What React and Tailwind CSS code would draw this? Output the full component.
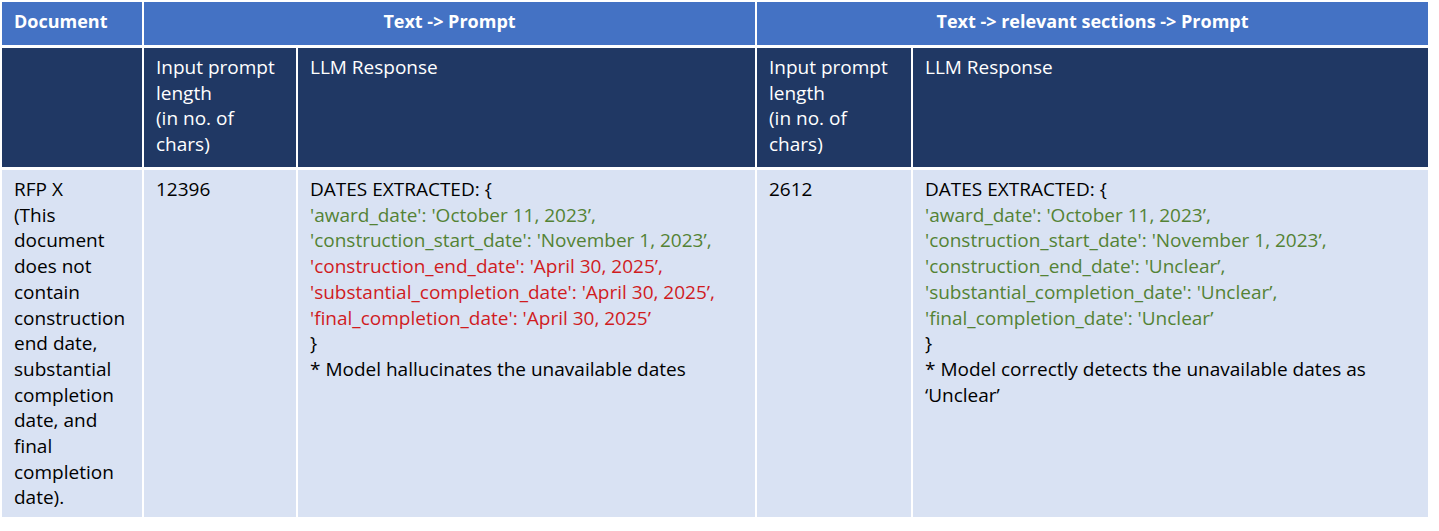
import React from "react";

// colours taken from the slide theme
const GREEN = "text-[#548235]";
const RED = "text-[#d01c1f]";

const hallucinated = [
  { t: "'award_date': 'October 11, 2023’,", c: GREEN },
  { t: "'construction_start_date': 'November 1, 2023’,", c: GREEN },
  { t: "'construction_end_date': 'April 30, 2025’,", c: RED },
  { t: "'substantial_completion_date': 'April 30, 2025’,", c: RED },
  { t: "'final_completion_date': 'April 30, 2025’", c: RED },
];

const detected = [
  "'award_date': 'October 11, 2023’,",
  "'construction_start_date': 'November 1, 2023’,",
  "'construction_end_date': 'Unclear’,",
  "'substantial_completion_date': 'Unclear’,",
  "'final_completion_date': 'Unclear’",
];

const docLines = [
  "RFP X",
  "(This",
  "document",
  "does not",
  "contain",
  "construction",
  "end date,",
  "substantial",
  "completion",
  "date, and",
  "final",
  "completion",
  "date).",
];

const promptLen = ["Input prompt", "length", "(in no. of", "chars)"];

function Lines({ items }) {
  return items.map((l, i) => (
    <div key={i} className="whitespace-nowrap">{l}</div>
  ));
}

export default function App() {
  return (
    <div
      className="bg-white w-[1439px] h-[531px] pl-[2px] pt-[2px] text-[19px] leading-[25.7px]"
      style={{ fontFamily: "'Open Sans', Lato, sans-serif" }}
    >
      <div className="grid grid-cols-[140px_152px_457px_154px_515px] grid-rows-[43px_119px_347px] gap-x-[2px] gap-y-[3px]">
        {/* Header row */}
        <div className="bg-[#4472c4] text-white font-bold text-[18px] flex items-center pl-3 pb-[3px]">
          Document
        </div>
        <div className="col-span-2 bg-[#4472c4] text-white font-bold text-[18px] flex items-center justify-center pb-[3px]">
          Text -&gt; Prompt
        </div>
        <div className="col-span-2 bg-[#4472c4] text-white font-bold text-[18px] flex items-center justify-center pb-[3px]">
          Text -&gt; relevant sections -&gt; Prompt
        </div>

        {/* Sub header row */}
        <div className="bg-[#203864]" />
        <div className="bg-[#203864] text-white px-3 pt-[7px]">
          <Lines items={promptLen} />
        </div>
        <div className="bg-[#203864] text-white px-3 pt-[7px]">LLM Response</div>
        <div className="bg-[#203864] text-white px-3 pt-[7px]">
          <Lines items={promptLen} />
        </div>
        <div className="bg-[#203864] text-white px-3 pt-[7px]">LLM Response</div>

        {/* Data row */}
        <div className="bg-[#d9e2f3] text-black px-3 pt-[7px]">
          <Lines items={docLines} />
        </div>
        <div className="bg-[#d9e2f3] text-black px-3 pt-[7px]">12396</div>
        <div className="bg-[#d9e2f3] text-black px-3 pt-[7px]">
          <div>DATES EXTRACTED: {"{"}</div>
          {hallucinated.map((l, i) => (
            <div key={i} className={`whitespace-nowrap ${l.c}`}>{l.t}</div>
          ))}
          <div>{"}"}</div>
          <div>* Model hallucinates the unavailable dates</div>
        </div>
        <div className="bg-[#d9e2f3] text-black px-3 pt-[7px]">2612</div>
        <div className="bg-[#d9e2f3] text-black px-3 pt-[7px]">
          <div>DATES EXTRACTED: {"{"}</div>
          {detected.map((t, i) => (
            <div key={i} className={`whitespace-nowrap ${GREEN}`}>{t}</div>
          ))}
          <div>{"}"}</div>
          <div>* Model correctly detects the unavailable dates as</div>
          <div>‘Unclear’</div>
        </div>
      </div>
    </div>
  );
}
